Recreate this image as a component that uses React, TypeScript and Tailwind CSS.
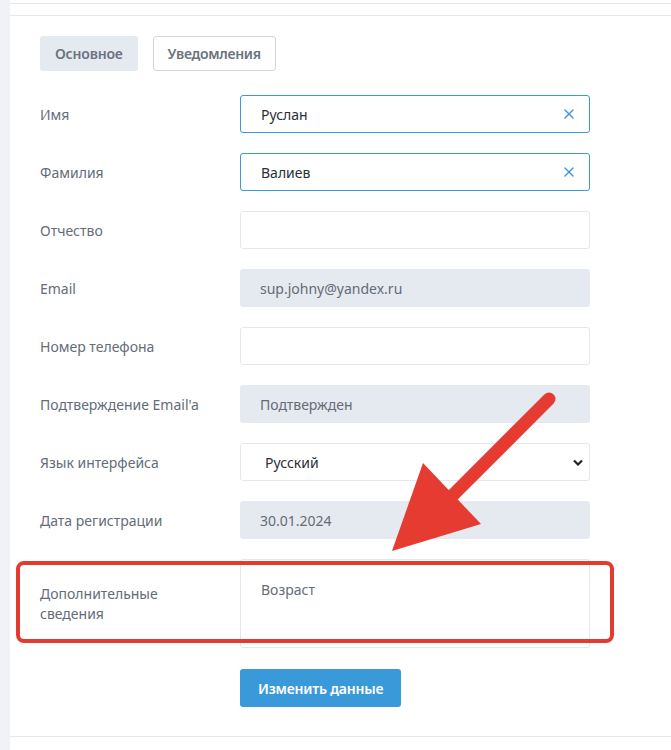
import { X } from "lucide-react";

const font = { fontFamily: '"Noto Sans", "Open Sans", sans-serif' };

function Label({ children }: { children: React.ReactNode }) {
  return <div className="w-[200px] shrink-0 text-[14px] text-[#646c78]">{children}</div>;
}

function TextRow({ label, value, active }: { label: string; value?: string; active?: boolean }) {
  return (
    <div className="flex items-center">
      <Label>{label}</Label>
      <div
        className={`flex h-[38px] w-[350px] items-center justify-between rounded-[3px] border bg-white pl-5 pr-3 text-[14px] text-[#2b2f36] ${
          active ? "border-[#3d9ad9]" : "border-[#e3e7ee]"
        }`}
      >
        <span>{value}</span>
        {active && <X className="h-4 w-4 text-[#3d9ad9]" strokeWidth={2} />}
      </div>
    </div>
  );
}

function ReadRow({ label, value }: { label: string; value: string }) {
  return (
    <div className="flex items-center">
      <Label>{label}</Label>
      <div className="flex h-[38px] w-[350px] items-center rounded-[3px] bg-[#e5e9f0] pl-5 text-[14px] text-[#646c78]">
        {value}
      </div>
    </div>
  );
}

export default function App() {
  return (
    <div className="relative flex min-h-[750px] bg-white" style={font}>
      <div className="w-[10px] shrink-0 bg-[#f0f2f7]" />
      <div className="flex-1">
        <div className="h-[4px] border-b border-[#e3e6ec]" />
        <div className="mt-[11px] border-y border-[#e3e6ec] pl-[30px] pt-[20px] pb-[29px]">
          <div className="flex gap-[15px]">
            <button className="h-[35px] rounded-[3px] bg-[#e5e9f0] px-[15px] text-[14px] font-semibold tracking-[-0.2px] text-[#6b7380]">
              Основное
            </button>
            <button className="h-[35px] rounded-[3px] border border-[#cfd6df] bg-white px-[14px] text-[14px] font-semibold tracking-[-0.3px] text-[#6b7380]">
              Уведомления
            </button>
          </div>

          <div className="mt-[24px] flex flex-col gap-[20px]">
            <TextRow label="Имя" value="Руслан" active />
            <TextRow label="Фамилия" value="Валиев" active />
            <TextRow label="Отчество" />
            <ReadRow label="Email" value="sup.johny@yandex.ru" />
            <TextRow label="Номер телефона" />
            <ReadRow label="Подтверждение Email'a" value="Подтвержден" />
            <div className="flex items-center">
              <Label>Язык интерфейса</Label>
              <div className="flex h-[38px] w-[350px] items-center justify-between rounded-[3px] border border-[#e3e7ee] bg-white pl-6 pr-[6px] text-[14px] text-[#2b2f36]">
                <span>Русский</span>
                <svg width="10" height="7" viewBox="0 0 10 7">
                  <path d="M1 1.5l4 4 4-4" fill="none" stroke="#222" strokeWidth="2.2" />
                </svg>
              </div>
            </div>
            <ReadRow label="Дата регистрации" value="30.01.2024" />
            <div className="flex items-start">
              <div className="w-[200px] shrink-0 pt-[25px] text-[14px] leading-[20px] text-[#646c78]">
                Дополнительные
                <br />
                сведения
              </div>
              <div className="h-[89px] w-[350px] rounded-[3px] border border-[#e3e7ee] bg-white pl-5 pt-[19px] text-[14px] text-[#646c78]">
                Возраст
              </div>
            </div>
            <div className="mt-[1px] flex">
              <div className="w-[200px] shrink-0" />
              <button className="h-[38px] rounded-[3px] bg-[#3a9ad9] px-[18px] text-[14px] font-semibold tracking-[-0.2px] text-white">
                Изменить данные
              </button>
            </div>
          </div>
        </div>
      </div>

      <svg className="pointer-events-none absolute inset-0" width="671" height="750" viewBox="0 0 671 750">
        <rect x="18" y="563" width="594" height="78" rx="6" fill="none" stroke="#e33b2f" strokeWidth="4" />
        <line x1="549" y1="399" x2="445" y2="503" stroke="#e53b30" strokeWidth="13" strokeLinecap="round" />
        <polygon points="392,551 423,463 481,524" fill="#e53b30" />
      </svg>
    </div>
  );
}
